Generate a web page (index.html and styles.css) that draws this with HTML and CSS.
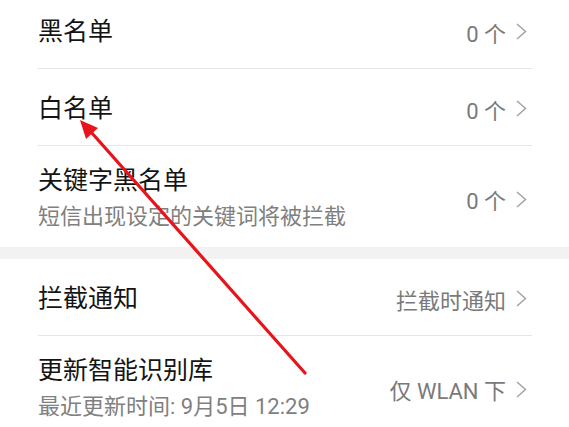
FILE: index.html
```html
<!DOCTYPE html>
<html lang="zh-CN">
<head>
  <meta charset="UTF-8">
  <title>骚扰拦截设置</title>
  <link rel="stylesheet" href="styles.css">
</head>
<body>
<!-- Gruppo liste -->
<section class="group group-first">
  <div class="row">
    <div class="row-text">
      <div class="row-title">黑名单</div>
    </div>
    <div class="row-value">0 个<svg class="chevron" viewBox="0 0 11 17"><path d="M1 1l8.5 7.5L1 16"/></svg></div>
  </div>
  <div class="row">
    <div class="row-text">
      <div class="row-title">白名单</div>
    </div>
    <div class="row-value">0 个<svg class="chevron" viewBox="0 0 11 17"><path d="M1 1l8.5 7.5L1 16"/></svg></div>
  </div>
  <div class="row row-double">
    <div class="row-text">
      <div class="row-title">关键字黑名单</div>
      <div class="row-sub">短信出现设定的关键词将被拦截</div>
    </div>
    <div class="row-value">0 个<svg class="chevron" viewBox="0 0 11 17"><path d="M1 1l8.5 7.5L1 16"/></svg></div>
  </div>
</section>

<div class="band"></div>

<!-- Gruppo impostazioni -->
<section class="group">
  <div class="row">
    <div class="row-text">
      <div class="row-title">拦截通知</div>
    </div>
    <div class="row-value">拦截时通知<svg class="chevron" viewBox="0 0 11 17"><path d="M1 1l8.5 7.5L1 16"/></svg></div>
  </div>
  <div class="row row-double">
    <div class="row-text">
      <div class="row-title">更新智能识别库</div>
      <div class="row-sub">最近更新时间: 9月5日 12:29</div>
    </div>
    <div class="row-value">仅 WLAN 下<svg class="chevron" viewBox="0 0 11 17"><path d="M1 1l8.5 7.5L1 16"/></svg></div>
  </div>
</section>

<!-- freccia di annotazione sopra il contenuto -->
<svg class="annotation" width="569" height="427" viewBox="0 0 569 427" xmlns="http://www.w3.org/2000/svg">
  <line x1="305" y1="373" x2="91" y2="132" stroke="#e8141b" stroke-width="3.2" stroke-linecap="round"/>
  <polygon points="80,120 98,128 86,139" fill="#e8141b"/>
</svg>
</body>
</html>
```

FILE: styles.css
```css
/* Base */
html, body {
  margin: 0;
  padding: 0;
  background: #ffffff;
}

body {
  position: relative;
  width: 569px;
  height: 427px;
  overflow: hidden;
  font-family: Roboto, "Noto Sans CJK SC", sans-serif;
  color: #141414;
}

/* Gruppi e righe */
.group {
  padding: 0 37px 0 38px;
}

.group-first {
  margin-top: -8px;
}

.row {
  box-sizing: border-box;
  display: flex;
  align-items: center;
  height: 77px;
  padding-top: 3px;
  border-bottom: 1px solid #e6e6e6;
}

.row:last-child {
  border-bottom: none;
}

.row.row-double {
  height: auto;
  padding: 19px 0 14px;
}

.row-text {
  flex: 1;
}

.row-title {
  font-size: 25px;
  line-height: 32px;
}

.row-sub {
  margin-top: 4px;
  font-size: 22px;
  line-height: 32px;
  color: #808080;
}

.row-value {
  display: flex;
  align-items: center;
  margin-right: 5px;
  font-size: 22px;
  color: #7a7a7a;
}

.chevron {
  width: 11px;
  height: 17px;
  margin-left: 10px;
  fill: none;
  stroke: #a3a3a3;
  stroke-width: 1.5;
}

.band {
  height: 12px;
  background: #f2f2f2;
}

/* Annotazione */
.annotation {
  position: absolute;
  left: 0;
  top: 0;
}
```
